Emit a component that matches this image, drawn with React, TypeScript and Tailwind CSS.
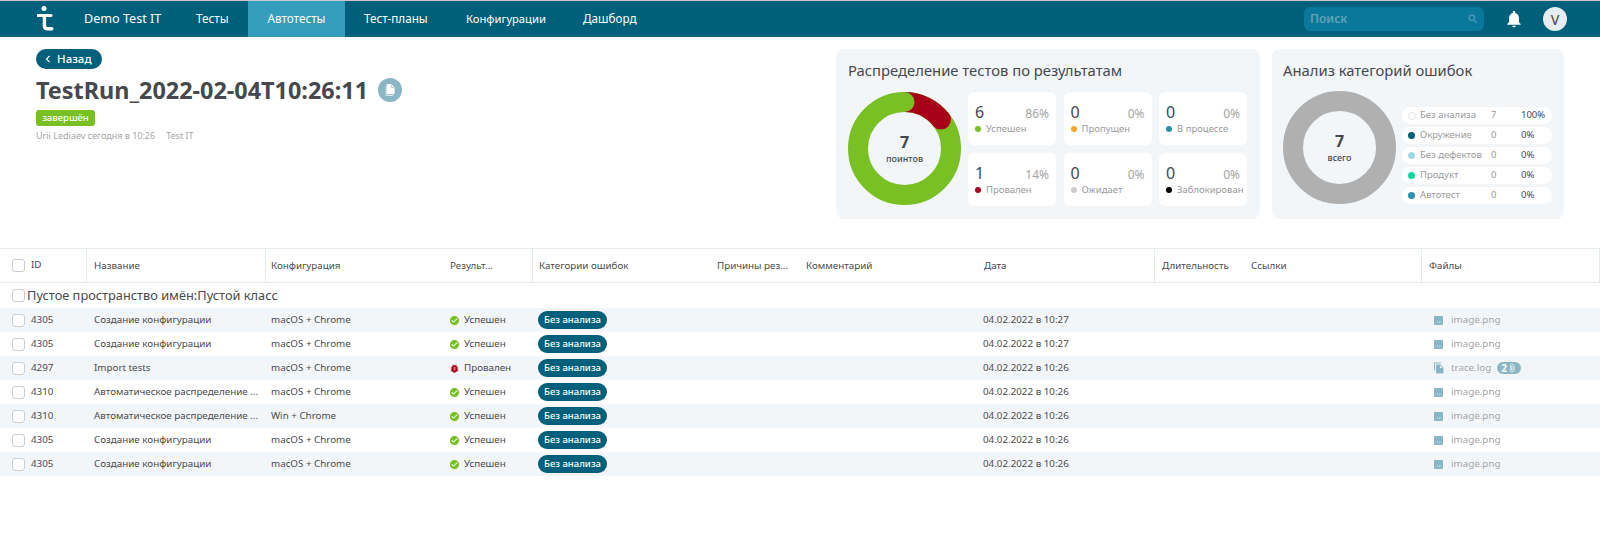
import { MdBugReport, MdCheckCircle, MdChevronLeft, MdFileCopy, MdNotifications, MdSearch, MdAttachFile } from "react-icons/md";

const cols = "grid grid-cols-[87px_179px_177px_90px_177px_89px_178px_178px_89px_178px_178px] w-[1600px]";

function Check() {
  return <span className="block w-[13px] h-[13px] rounded-[3px] border border-[#c9ced2] bg-white shrink-0" />;
}

function Logo() {
  return (
    <svg width="17" height="26" viewBox="0 0 17 26" className="block">
      <circle cx="7" cy="2.6" r="2.5" fill="#fff" />
      <path d="M0.8 9.6 H14" stroke="#fff" strokeWidth="3" fill="none" strokeLinecap="round" />
      <path d="M7.4 9.6 V19.5 Q7.4 22.8 10.8 22.8 H14.8" stroke="#fff" strokeWidth="3.4" fill="none" strokeLinecap="round" />
    </svg>
  );
}

function ImageIcon() {
  return (
    <svg width="11" height="11" viewBox="0 0 11 11" className="block">
      <rect x="1" y="1" width="9" height="9" rx="1" fill="#8ab5c5" />
      <path d="M3.4 7.6 L4.2 6.6 L5 7.6 Z M5.8 7.6 L6.8 6.4 L7.8 7.6 Z" fill="#fff" />
    </svg>
  );
}

function DocIcon() {
  return (
    <svg width="14" height="14" viewBox="0 0 14 14" className="block">
      <path d="M2.6 3.4 V12 Q2.6 13 3.6 13 H10 V12 H3.6 V3.4 Z" fill="#e3edf1" />
      <path d="M4.6 1 H8.4 L11.6 4.2 V10.4 Q11.6 11.2 10.8 11.2 H4.6 Q3.8 11.2 3.8 10.4 V1.8 Q3.8 1 4.6 1 Z" fill="#fff" />
      <path d="M8.2 1.4 V4.4 H11.2" fill="none" stroke="#8ab5c5" strokeWidth="0.7" />
    </svg>
  );
}

function Tile({ n, p, label, color }: { n: string; p: string; label: string; color: string }) {
  return (
    <div className="h-[53px] w-[88px] rounded-[6px] bg-white px-[7px] pt-[11px]">
      <div className="flex items-baseline justify-between">
        <span className="text-[16px] leading-[19px] text-[#3c4a57]">{n}</span>
        <span className="text-[12px] leading-[19px] text-[#a5a5a5]">{p}</span>
      </div>
      <div className="flex items-center gap-[5px] -mt-[1px]">
        <span className="w-[6px] h-[6px] rounded-full shrink-0" style={{ backgroundColor: color }} />
        <span className="text-[9.5px] leading-[14px] text-[#9a9a9a] whitespace-nowrap">{label}</span>
      </div>
    </div>
  );
}

function LegendRow({ label, n, p, color, hollow }: { label: string; n: string; p: string; color: string; hollow?: boolean }) {
  return (
    <div className="h-[17px] w-[150px] rounded-full bg-white flex items-center pl-[6px] text-[9.5px] text-[#9a9a9a]">
      <span className={hollow ? "w-[8px] h-[8px] rounded-full border border-[#e4e7ea] bg-white shrink-0" : "w-[7px] h-[7px] rounded-full shrink-0"} style={hollow ? undefined : { backgroundColor: color }} />
      <span className={hollow ? "ml-[4px] w-[71px] whitespace-nowrap" : "ml-[5px] w-[71px] whitespace-nowrap"}>{label}</span>
      <span className="w-[30px]">{n}</span>
      <span className="text-[#3c4a57]">{p}</span>
    </div>
  );
}

type Row = { id: string; name: string; cfg: string; fail?: boolean; time: string; file: string; multi?: boolean };

const rows: Row[] = [
  { id: "4305", name: "Создание конфигурации", cfg: "macOS + Chrome", time: "04.02.2022 в 10:27", file: "image.png" },
  { id: "4305", name: "Создание конфигурации", cfg: "macOS + Chrome", time: "04.02.2022 в 10:27", file: "image.png" },
  { id: "4297", name: "Import tests", cfg: "macOS + Chrome", fail: true, time: "04.02.2022 в 10:26", file: "trace.log", multi: true },
  { id: "4310", name: "Автоматическое распределение ...", cfg: "macOS + Chrome", time: "04.02.2022 в 10:26", file: "image.png" },
  { id: "4310", name: "Автоматическое распределение ...", cfg: "Win + Chrome", time: "04.02.2022 в 10:26", file: "image.png" },
  { id: "4305", name: "Создание конфигурации", cfg: "macOS + Chrome", time: "04.02.2022 в 10:26", file: "image.png" },
  { id: "4305", name: "Создание конфигурации", cfg: "macOS + Chrome", time: "04.02.2022 в 10:26", file: "image.png" },
];

const heads: [string, boolean][] = [
  ["Название", true],
  ["Конфигурация", false],
  ["Результ...", true],
  ["Категории ошибок", false],
  ["Причины рез...", false],
  ["Комментарий", false],
  ["Дата", true],
  ["Длительность", false],
  ["Ссылки", true],
  ["Файлы", true],
];

export default function App() {
  return (
    <div className="w-[1600px] h-[552px] bg-white overflow-hidden font-['Noto_Sans',sans-serif] text-[#4a4a4a]">
      <div className="h-px bg-[#c8c8c8]" />
      <header className="h-[36px] bg-[#005f7a] flex items-center text-white">
        <div className="ml-[37px] w-[47px]"><Logo /></div>
        <span className="text-[12.6px] w-[112px]">Demo Test IT</span>
        <span className="text-[11.7px] w-[52px]">Тесты</span>
        <span className="text-[11.7px] w-[97px] h-full bg-[#339dbb] flex items-center justify-center">Автотесты</span>
        <span className="text-[11.7px] ml-[19px] w-[102px]">Тест-планы</span>
        <span className="text-[11.2px] w-[117px]">Конфигурации</span>
        <span className="text-[11.7px]">Дашборд</span>
        <div className="ml-auto w-[180px] h-[24px] rounded-[6px] bg-[#0a789a] flex items-center justify-between pl-[6px] pr-[5px]">
          <span className="text-[12px] font-semibold text-[#5ea3b9]">Поиск</span>
          <MdSearch className="text-[#5ea3b9]" size={12} />
        </div>
        <MdNotifications className="ml-[20px] text-white" size={20} />
        <div className="ml-[19px] mr-[33px] w-[24px] h-[24px] rounded-full bg-[#e6eef1] text-[#555] text-[14px] font-medium flex items-center justify-center">V</div>
      </header>

      <section className="flex h-[211px]">
        <div className="pl-[36px] pt-[12px] w-[836px]">
          <div className="w-[66px] h-[20px] rounded-full bg-[#005f7a] text-white text-[11.5px] font-medium flex items-center pl-[5px] gap-[2px]">
            <MdChevronLeft size={14} />
            Назад
          </div>
          <div className="flex items-center mt-[9px] h-[24px]">
            <h1 className="text-[23.4px] leading-[24px] font-bold text-[#45494d] whitespace-nowrap">TestRun_2022-02-04T10:26:11</h1>
            <span className="ml-[10px] w-[24px] h-[24px] rounded-full bg-[#8ab5c5] flex items-center justify-center">
              <DocIcon />
            </span>
          </div>
          <div className="mt-[8px] w-[59px] h-[16px] rounded-[3px] bg-[#78c024] text-white text-[9.5px] font-medium flex items-center justify-center">завершён</div>
          <div className="mt-[3px] flex text-[9px] leading-[14px] text-[#a5a5a5]">
            <span>Urii Lediaev сегодня в 10:26</span>
            <span className="ml-[11px]">Test IT</span>
          </div>
        </div>

        <div className="mt-[12px] w-[424px] h-[170px] rounded-[8px] bg-[#f3f6f9] px-[12px] pt-[10px]">
          <div className="text-[14.8px] leading-[22px] text-[#45494d] whitespace-nowrap">Распределение тестов по результатам</div>
          <div className="flex mt-[11px]">
            <div className="relative w-[113px] h-[113px] shrink-0">
              <svg width="113" height="113" viewBox="0 0 113 113" className="block">
                <circle cx="56.5" cy="56.5" r="46.5" fill="none" stroke="#78c024" strokeWidth="20" />
                <path d="M56.5 10 A46.5 46.5 0 0 1 92.9 27.6" fill="none" stroke="#a80019" strokeWidth="20" />
                <circle cx="92.9" cy="27.6" r="10" fill="#a80019" />
                <circle cx="56.5" cy="10" r="10" fill="#78c024" />
              </svg>
              <div className="absolute inset-0 flex flex-col items-center justify-center">
                <span className="text-[16px] leading-[20px] font-bold text-[#45494d]">7</span>
                <span className="text-[9px] leading-[14px] font-medium text-[#4a4a4a]">поинтов</span>
              </div>
            </div>
            <div className="ml-[7px] grid grid-cols-[88px_88px_88px] gap-x-[7.5px] gap-y-[8px]">
              <Tile n="6" p="86%" label="Успешен" color="#78c024" />
              <Tile n="0" p="0%" label="Пропущен" color="#f5a623" />
              <Tile n="0" p="0%" label="В процессе" color="#2a90b0" />
              <Tile n="1" p="14%" label="Провален" color="#a80019" />
              <Tile n="0" p="0%" label="Ожидает" color="#cccccc" />
              <Tile n="0" p="0%" label="Заблокирован" color="#000000" />
            </div>
          </div>
        </div>

        <div className="ml-[12px] mt-[12px] w-[292px] h-[170px] rounded-[8px] bg-[#f3f6f9] pl-[11px] pt-[10px]">
          <div className="text-[14.8px] leading-[22px] text-[#45494d] whitespace-nowrap">Анализ категорий ошибок</div>
          <div className="flex mt-[10px]">
            <div className="relative w-[113px] h-[113px] shrink-0">
              <svg width="113" height="113" viewBox="0 0 113 113" className="block">
                <circle cx="56.5" cy="56.5" r="46.5" fill="none" stroke="#b0b0b0" strokeWidth="20" />
              </svg>
              <div className="absolute inset-0 flex flex-col items-center justify-center">
                <span className="text-[16px] leading-[20px] font-bold text-[#45494d]">7</span>
                <span className="text-[9px] leading-[14px] font-medium text-[#4a4a4a]">всего</span>
              </div>
            </div>
            <div className="ml-[6px] pt-[16px] flex flex-col gap-[3px]">
              <LegendRow label="Без анализа" n="7" p="100%" color="#fff" hollow />
              <LegendRow label="Окружение" n="0" p="0%" color="#005f7a" />
              <LegendRow label="Без дефектов" n="0" p="0%" color="#a0d8e8" />
              <LegendRow label="Продукт" n="0" p="0%" color="#0dd89a" />
              <LegendRow label="Автотест" n="0" p="0%" color="#2a90b0" />
            </div>
          </div>
        </div>
      </section>

      <div className={`${cols} h-[35px] border-y border-[#e3ebee] text-[9.8px] text-[#4a4a4a]`}>
        <div className="flex items-center pl-[12px] gap-[6px] border-r border-[#e3ebee]">
          <Check />
          <span>ID</span>
        </div>
        {heads.map(([h, b], i) => (
          <div key={h} className={`flex items-center pt-[2px] whitespace-nowrap ${i === 1 ? "pl-[5px]" : i === 3 ? "pl-[6px]" : "pl-[7px]"} ${b ? "border-r border-[#e3ebee]" : ""}`}>{h}</div>
        ))}
      </div>

      <div className="h-[25px] flex items-center pl-[12px] gap-[2px] text-[12.8px] text-[#4a4a4a]">
        <Check />
        <span>Пустое пространство имён:Пустой класс</span>
      </div>

      {rows.map((r, i) => (
        <div key={i} className={`${cols} h-[24px] items-center text-[9.8px] ${i % 2 === 0 ? "bg-[#f3f6f9]" : "bg-white"}`}>
          <div className="flex items-center pl-[12px] gap-[6px]">
            <Check />
            <span>{r.id}</span>
          </div>
          <div className="pl-[7px] whitespace-nowrap">{r.name}</div>
          <div className="pl-[5px] whitespace-nowrap">{r.cfg}</div>
          <div className="pl-[6px] flex items-center gap-[4px] whitespace-nowrap">
            {r.fail ? <MdBugReport className="text-[#a80019]" size={11} /> : <MdCheckCircle className="text-[#78c024]" size={11} />}
            {r.fail ? "Провален" : "Успешен"}
          </div>
          <div className="pl-[5px]">
            <span className="inline-flex items-center h-[18px] px-[6px] rounded-full bg-[#005f7a] text-white text-[9.5px] font-medium whitespace-nowrap">Без анализа</span>
          </div>
          <div />
          <div />
          <div className="pl-[6px] whitespace-nowrap">{r.time}</div>
          <div />
          <div />
          <div className="pl-[11px] flex items-center text-[#a5a5a5]">
            <span className="text-[#8ab5c5] w-[18px] flex">
              {r.multi ? <MdFileCopy size={12} /> : <ImageIcon />}
            </span>
            <span>{r.file}</span>
            {r.multi && (
              <span className="ml-[6px] w-[24px] h-[12px] rounded-full bg-[#8ab5c5] text-white text-[10px] font-bold flex items-center justify-center">
                2<MdAttachFile size={10} />
              </span>
            )}
          </div>
        </div>
      ))}
    </div>
  );
}
